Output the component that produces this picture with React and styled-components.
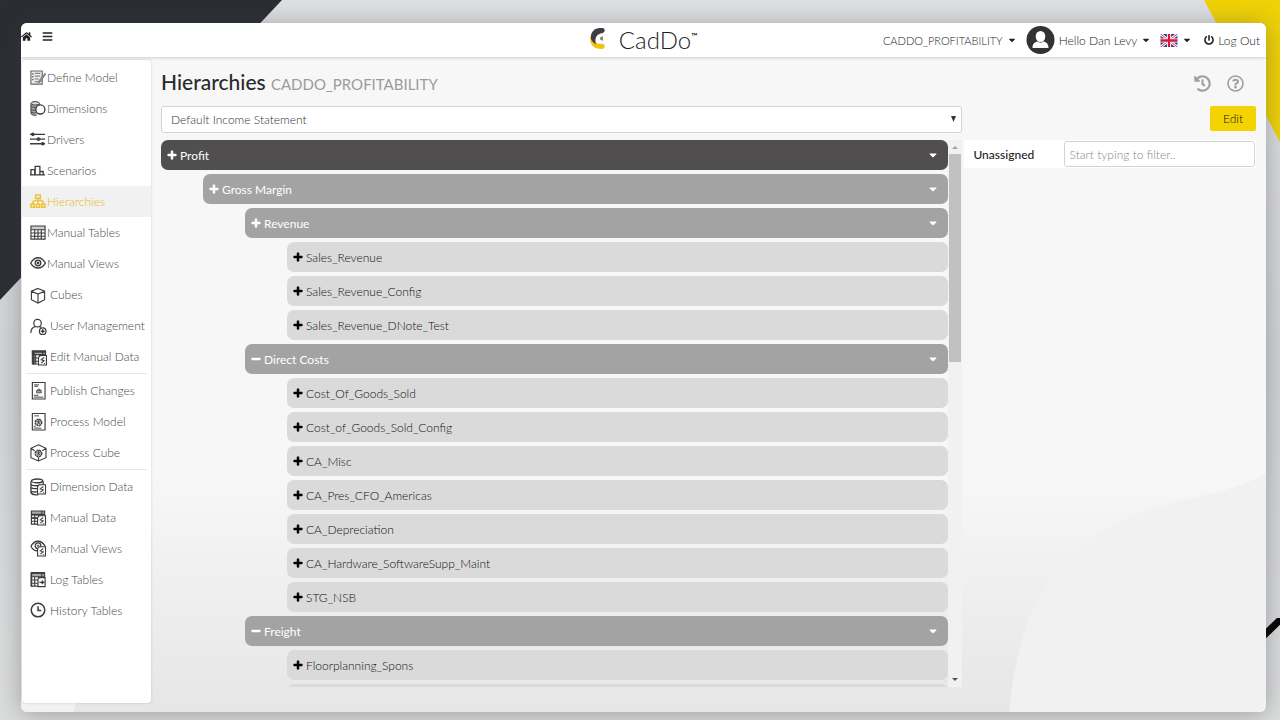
import React from 'react'
import styled, { createGlobalStyle, css } from 'styled-components'
import {
    FaBars,
    FaCaretDown,
    FaHistory,
    FaHome,
    FaMinus,
    FaPlus,
    FaPowerOff,
    FaRegQuestionCircle,
} from 'react-icons/fa'

const GlobalStyle = createGlobalStyle`
    * {
        box-sizing: border-box;
    }
    body {
        margin: 0;
        font-family: Lato, "Open Sans", sans-serif;
        font-size: 12px;
        font-weight: 300;
        color: #222;
        background: #d6d7d9;
    }
    button,
    input,
    select {
        font: inherit;
        color: inherit;
    }
`

/* page and window */
const Page = styled.div`
    position: relative;
    display: flex;
    min-height: 100vh;
    padding: 23px 14px 8px 21px;
    overflow: hidden;
    background: linear-gradient(#dfe0e2, #d2d3d5 50%, #dcdddd);
`
const DarkCorner = styled.div`
    position: absolute;
    top: 0;
    left: 0;
    width: 282px;
    height: 300px;
    background: #2a2d32;
    clip-path: polygon(0 0, 100% 0, 0 100%);
`
const YellowCorner = styled.div`
    position: absolute;
    top: 0;
    right: 0;
    width: 76px;
    height: 142px;
    background: #f0d206;
    clip-path: polygon(0 0, 100% 0, 100% 100%);
`
const Slash = styled.svg`
    position: absolute;
    right: 0;
    bottom: 76px;
    width: 24px;
    height: 26px;
`
const Window = styled.div`
    position: relative;
    display: flex;
    flex: 1;
    flex-direction: column;
    min-width: 0;
    overflow: hidden;
    border-radius: 6px;
    background: linear-gradient(#f7f7f7 66%, #e6e6e6);
`
const Shade = styled.div`
    position: relative;
    display: flex;
    flex: 1;
    min-width: 0;
    border-radius: 6px;
    box-shadow: 0 2px 24px rgba(60, 66, 74, 0.4);
`
const Curve = styled.svg`
    position: absolute;
    right: 0;
    bottom: 0;
    width: 260px;
    height: 245px;
`
const Foot = styled.div`
    position: absolute;
    left: 0;
    bottom: 0;
    width: 56px;
    height: 12px;
    background: #f1f1f1;
    clip-path: polygon(0 0, 100% 0, 94% 100%, 0 100%);
`

/* top bar */
const TopBar = styled.header`
    position: relative;
    display: grid;
    grid-template-columns: 1fr auto 1fr;
    align-items: center;
    height: 34px;
    background: #fff;
    box-shadow: 0 1px 3px rgba(0, 0, 0, 0.16);
`
const PlainButton = styled.button`
    display: inline-flex;
    align-items: center;
    padding: 0;
    border: 0;
    background: none;
    cursor: pointer;
    white-space: nowrap;
`
const LeftTools = styled.div`
    display: flex;
    align-items: center;
    gap: 10px;
    padding-bottom: 8px;
    color: #222;
`
const Logo = styled.a`
    display: flex;
    align-items: center;
    gap: 13px;
    color: #1d1d1b;
    text-decoration: none;
`
const LogoName = styled.span`
    display: flex;
    font-size: 24px;
    line-height: 24px;
`
const Trade = styled.span`
    font-size: 8px;
    font-weight: 700;
    line-height: 16px;
`
const UserTools = styled.nav`
    display: flex;
    align-items: center;
    justify-content: flex-end;
    padding-right: 6px;
`
const Menu = styled(PlainButton)`
    gap: 4px;
    margin-right: ${props => props.$after || '9px'};
    font-size: ${props => (props.$small ? '11px' : '12px')};
`

/* side bar */
const Body = styled.div`
    position: relative;
    display: flex;
    flex: 1;
    padding: 3px 10px 9px 1px;
`
const SideBar = styled.nav`
    flex: none;
    width: 129px;
    padding-top: 2px;
    border-radius: 4px;
    background: #fff;
    box-shadow: 0 0 3px rgba(0, 0, 0, 0.16);
`
const SideLink = styled.a`
    display: flex;
    align-items: center;
    gap: ${props => (props.$wide ? '4px' : '1px')};
    height: 31px;
    padding-left: 8px;
    color: #44484c;
    text-decoration: none;
    white-space: nowrap;
    ${props =>
        props.$active &&
        css`
            color: #e8b820;
            background: #f1f1f1;
        `}
`
const SideIcon = styled.svg`
    flex: none;
    width: 16px;
    height: 18px;
    overflow: visible;
    fill: none;
    stroke: ${props => (props.$active ? '#ecc43a' : '#3c3c3c')};
`
const Divider = styled.hr`
    height: 1px;
    margin: 1px 4px;
    border: 0;
    background: #e6e6e6;
`

/* main area */
const Main = styled.main`
    flex: 1;
    min-width: 0;
    padding-left: 10px;
`
const TitleRow = styled.div`
    display: flex;
    align-items: center;
    justify-content: space-between;
    height: 46px;
    padding-right: 12px;
`
const Title = styled.h1`
    margin: 0;
    font-size: 21px;
    font-weight: 500;
    line-height: 24px;
    color: #2a2a2a;
`
const Subtitle = styled.small`
    font-size: 15px;
    font-weight: 400;
    color: #9b9b9b;
`
const TitleTools = styled.div`
    display: flex;
    gap: 16px;
    color: #a0a0a0;
`
const Columns = styled.div`
    display: grid;
    grid-template-columns: minmax(0, 800fr) minmax(0, 293fr);
`
const SelectBox = styled.div`
    position: relative;
    height: 27px;
    margin-bottom: 7px;
`
const Select = styled.select`
    appearance: none;
    width: 100%;
    height: 27px;
    padding: 0 9px;
    border: 1px solid #d4d4d4;
    border-radius: 3px;
    background: #fff;
    color: #333;
`
const SelectArrow = styled.svg`
    position: absolute;
    top: 10px;
    right: 6px;
    width: 5px;
    height: 6px;
    fill: #333;
    pointer-events: none;
`
const ScrollPane = styled.div`
    display: flex;
    height: calc(100vh - 173px);
`
const Tree = styled.ul`
    display: flex;
    flex: 1;
    flex-direction: column;
    gap: 4px;
    min-width: 0;
    margin: 0;
    padding: 0;
    overflow: hidden;
    list-style: none;
`
const looks = {
    root: { back: '#504e4f', ink: '#fff' },
    group: { back: '#a3a3a3', ink: '#fff' },
    leaf: { back: '#dadada', ink: '#111' },
}
const Node = styled.li`
    display: flex;
    flex: none;
    align-items: center;
    gap: 3px;
    height: 30px;
    margin-left: ${props => props.$level * 42}px;
    padding: 0 9px 0 6px;
    border-radius: 7px;
    background: ${props => looks[props.$kind].back};
    color: ${props => looks[props.$kind].ink};
    font-weight: ${props => (props.$kind === 'leaf' ? 300 : 400)};
`
const Toggle = styled(PlainButton)`
    color: ${props => (props.$dark ? '#000' : '#fff')};

    svg {
        stroke: currentColor;
        stroke-width: 30px;
    }
`
const NodeMenu = styled(PlainButton)`
    margin-left: auto;
`
const ScrollTrack = styled.div`
    display: flex;
    flex: none;
    flex-direction: column;
    align-items: center;
    width: 14px;
    background: #f1f1f1;
`
const ScrollArrow = styled.svg`
    flex: none;
    width: 14px;
    height: 14px;
    fill: ${props => (props.$off ? '#a3a3a3' : '#505050')};
`
const ScrollSpace = styled.div`
    flex: 1;
    width: 12px;
`
const ScrollThumb = styled.div`
    height: 40%;
    background: #c1c1c1;
`
const SidePane = styled.div`
    padding-left: 2px;
`
const EditRow = styled.div`
    display: flex;
    justify-content: flex-end;
    height: 34px;
`
const EditButton = styled.button`
    width: 46px;
    height: 25px;
    padding: 0;
    border: 0;
    border-radius: 2px;
    background: #f4d303;
    color: #111;
    cursor: pointer;
`
const FilterRow = styled.div`
    display: flex;
    align-items: center;
    justify-content: space-between;
    height: 28px;
    padding: 0 1px 0 9px;
    background: #fff;
`
const FilterLabel = styled.label`
    font-weight: 500;
    color: #222;
`
const FilterInput = styled.input`
    width: 68%;
    height: 26px;
    padding: 0 5px;
    border: 1px solid #d4d4d4;
    border-radius: 3px;
    background: #fff;
    &::placeholder {
        color: #888;
        opacity: 1;
    }
`

const gear = (
    <>
        <circle cx="9" cy="9.500" r="3.500" fill="#bbb" strokeWidth="1.400" strokeDasharray="2 .8" />
        <path d="M6.500 7.500l5 4.500M11.500 7l-4 5M9 6v4" strokeWidth=".8" />
    </>
)
const sheet = (
    <>
        <path d="M8 8.500L10 6.500h6.500v10H8z" fill="#f4f4f4" strokeWidth="1.100" />
        <path d="M14 8.500l-3 2.500 3 1-3 2.500M14 15h1" strokeWidth="1.100" />
    </>
)
const grid = (
    <>
        <path d="M1 1.500h15v4H1z" fill="#aaa" strokeWidth="0" />
        <path d="M1.500 1.500h14v14h-14zM1 5.500h15M1 9h15M1 12.500h15M5 5v11M9 5v11M12.500 1v15" strokeWidth="1.200" />
    </>
)

const icons = {
    define: (
        <g stroke="#666">
            <path d="M1 1.500h12v14H1z" fill="#eee" strokeWidth="1.200" />
            <path d="M5 4h6M5 7h6M5 10h4M5 13h6" />
            <path d="M3 4v9" strokeWidth="1.500" strokeDasharray="1.500" />
            <path d="M16 4l-6 7-1 3 2.500-1.500 5-7.500z" fill="#999" strokeWidth=".8" />
        </g>
    ),
    dimensions: (
        <>
            <path d="M10 4.500v-1C10 1 1 1 1 3.500v10c0 2 4 2.500 6 2" fill="#aaa" />
            <ellipse cx="5.500" cy="3" rx="4.500" ry="1.800" fill="#ddd" />
            <path d="M1 6c1 1.500 4 1.500 6 1M1 9c1 1.500 3 1.500 5 1M1 12c1 1 3 1.500 5 1" />
            <circle cx="11" cy="9.500" r="4.800" fill="#fff" strokeWidth="1.400" />
        </>
    ),
    drivers: (
        <g strokeWidth="1.400">
            <path d="M0 3h16M0 8h16M0 13h16" />
            <circle cx="3" cy="3" r="1.200" fill="#3c3c3c" />
            <circle cx="9" cy="8" r="1.300" fill="#777" />
            <circle cx="13.500" cy="13" r="1.200" fill="#3c3c3c" />
        </g>
    ),
    scenarios: (
        <path d="M1 13V7.500h4V13M5.500 13V4h5v9M10.500 13V9.500H14V13M0 13.200h16" strokeWidth="1.400" />
    ),
    hierarchies: (
        <path
            d="M6 1.500h5v3.500H6zM1 11.500h3.500v3H1zM6.700 11.500h3.600v3H6.700zM12.500 11.500H16v3h-3.500zM8.500 5v6M3 11.500V9l2-1.500h7L14 9v2.500"
            strokeWidth="1.600"
        />
    ),
    tables: (
        <>
            <path d="M1 1.500h15v4H1z" fill="#ccc" strokeWidth="0" />
            <path d="M1 1.500h15v14H1zM1 5.500h15M1 9h15M1 12.500h15M5 5v10M8.500 5v10M12 5v10" strokeWidth="1.200" />
        </>
    ),
    views: (
        <g strokeWidth="1.400">
            <path d="M.8 8c4-7.500 11.500-7.500 15.500 0-4 7-11.500 7-15.500 0z" />
            <circle cx="8.500" cy="8" r="3" />
            <circle cx="8.500" cy="8" r=".8" />
        </g>
    ),
    cubes: (
        <path d="M8.500 2l7 3v9l-7 3.500-7-3.500V5zM1.500 5l7 3 7-3M8.500 8v9.500" strokeWidth="1.200" />
    ),
    users: (
        <g strokeWidth="1.300">
            <circle cx="8" cy="6" r="4" />
            <path d="M.8 16.500C1 12 3 10 6 9.700M10 9.700l2 .8" />
            <circle cx="13.500" cy="14.500" r="3.500" fill="#fff" />
            <path d="M11.500 14.500h4M13.500 12.500v4" strokeWidth="1.500" />
        </g>
    ),
    edit: (
        <g transform="translate(1 1)">
            {grid}
            <path d="M1 2.500h15M3 2v14" strokeWidth="2" />
            {sheet}
        </g>
    ),
    publish: (
        <>
            <path d="M2.500 0h13.500v17.500H2.500z" strokeWidth="1.200" />
            <path d="M4.500 2.500h5M4.500 4h4M4 13.500h5M4 15.500h10" />
            <path d="M7 8.500h5v2.500H7zM8 8.500v-.8l1.500-1 1.500 1v.8" fill="#aaa" strokeWidth=".8" />
        </>
    ),
    model: (
        <>
            <path d="M2.500 0h13.500v17.500H2.500z" strokeWidth="1.200" />
            <path d="M4.500 2.500h5M4 15.500h8M4 13.500h2" />
            {gear}
        </>
    ),
    cube: (
        <>
            <path d="M9 .3l8 3.700v10l-8 3.500-8-3.500V4zM1 4l4 2.500M17 4l-4 2.500M9 13.500v4" strokeWidth="1.200" />
            {gear}
        </>
    ),
    data: (
        <g strokeWidth="1.400">
            <ellipse cx="7.500" cy="2.500" rx="6" ry="2" />
            <path d="M1 3v12c1 2 5 2.500 8 2M14 3v4M1 6c1 2 6 2 9 1M1 9.500c1 1.500 5 1.500 7 1M1 13c1 1.500 5 1.500 7 1" />
            {sheet}
        </g>
    ),
    manual: (
        <>
            {grid}
            <path d="M1 5.500h15M1 9h7" strokeWidth="1.800" />
            {sheet}
        </>
    ),
    eye: (
        <>
            <path d="M1 6c4-7 11-7 15 0M1 6c2 4 4 5 7 5" strokeWidth="1.400" />
            <circle cx="8.500" cy="5.500" r="3" strokeWidth="1.300" />
            <circle cx="8.500" cy="5.500" r=".8" />
            {sheet}
        </>
    ),
    log: (
        <>
            {grid}
            <path d="M1 1.500h15M1.500 1v15" strokeWidth="1.800" />
            <path d="M8.500 8L10 6.500h6v9.500H8.500z" fill="#fff" strokeWidth="1.200" />
            <path d="M10 11.500h4M12.500 9.700l2 1.800-2 1.800" strokeWidth="1.300" />
        </>
    ),
    history: (
        <g strokeWidth="1.600">
            <circle cx="8.500" cy="8" r="7.200" />
            <path d="M8.500 4v4.500H12" />
        </g>
    ),
}

const menuGroups = [
    [
        ['Define Model', 'define'],
        ['Dimensions', 'dimensions'],
        ['Drivers', 'drivers'],
        ['Scenarios', 'scenarios'],
        ['Hierarchies', 'hierarchies'],
        ['Manual Tables', 'tables'],
        ['Manual Views', 'views'],
        ['Cubes', 'cubes', true],
        ['User Management', 'users', true],
        ['Edit Manual Data', 'edit', true],
    ],
    [
        ['Publish Changes', 'publish', true],
        ['Process Model', 'model', true],
        ['Process Cube', 'cube', true],
    ],
    [
        ['Dimension Data', 'data', true],
        ['Manual Data', 'manual', true],
        ['Manual Views', 'eye', true],
        ['Log Tables', 'log', true],
        ['History Tables', 'history', true],
    ],
]

const nodes = [
    { name: 'Profit', level: 0, kind: 'root' },
    { name: 'Gross Margin', level: 1, kind: 'group' },
    { name: 'Revenue', level: 2, kind: 'group' },
    { name: 'Sales_Revenue', level: 3, kind: 'leaf' },
    { name: 'Sales_Revenue_Config', level: 3, kind: 'leaf' },
    { name: 'Sales_Revenue_DNote_Test', level: 3, kind: 'leaf' },
    { name: 'Direct Costs', level: 2, kind: 'group', open: true },
    { name: 'Cost_Of_Goods_Sold', level: 3, kind: 'leaf' },
    { name: 'Cost_of_Goods_Sold_Config', level: 3, kind: 'leaf' },
    { name: 'CA_Misc', level: 3, kind: 'leaf' },
    { name: 'CA_Pres_CFO_Americas', level: 3, kind: 'leaf' },
    { name: 'CA_Depreciation', level: 3, kind: 'leaf' },
    { name: 'CA_Hardware_SoftwareSupp_Maint', level: 3, kind: 'leaf' },
    { name: 'STG_NSB', level: 3, kind: 'leaf' },
    { name: 'Freight', level: 2, kind: 'group', open: true },
    { name: 'Floorplanning_Spons', level: 3, kind: 'leaf' },
    { name: '', level: 3, kind: 'leaf' },
]

const LogoMark = () => (
    <svg width="16" height="25" viewBox="0 1 16 25">
        <path
            d="M.5 9C-1 18 4 22 12 22c3.500 0 3.500-5 .5-5.200C6 17 2 15 .5 9z"
            fill="#efc310"
        />
        <path
            d="M12.500 1C4 0 0 6 1 12c1 2.500 3 4.500 5 5C4.500 12 6 7 12 6.200c3.500-.5 3.500-5 .5-5.200z"
            fill="#3f3f41"
        />
        <path d="M13 9v5l-3-1.500v-2z" fill="#888" />
    </svg>
)

const Avatar = () => (
    <svg width="29" height="28" viewBox="0 0 28 28">
        <circle cx="14" cy="14" r="14" fill="#333" />
        <ellipse cx="14" cy="10.500" rx="4.800" ry="5.500" fill="#fff" />
        <path d="M6 22c0-4 2-6 5-6.500 2 1.500 4 1.500 6 0 3 .5 5 2.500 5 6.500z" fill="#fff" />
    </svg>
)

const Flag = () => (
    <svg width="18" height="13" viewBox="0 0 18 14">
        <path d="M0 0h18v14H0z" fill="#2b3f8c" />
        <path d="M0 0l18 14M18 0L0 14" stroke="#fff" strokeWidth="3" />
        <path d="M0 0l18 14M18 0L0 14" stroke="#d8294a" strokeWidth="1" />
        <path d="M9 0v14M0 7h18" stroke="#fff" strokeWidth="4.500" />
        <path d="M9 0v14M0 7h18" stroke="#d8153a" strokeWidth="2.500" />
    </svg>
)

const SideMenu = () => (
    <SideBar>
        {menuGroups.map((group, index) => (
            <React.Fragment key={index}>
                {index > 0 && <Divider />}
                {group.map(([label, icon, wide]) => {
                    const active = label === 'Hierarchies'
                    return (
                        <SideLink href="#" key={label} $wide={wide} $active={active}>
                            <SideIcon viewBox="0 0 17 18" $active={active}>
                                {icons[icon]}
                            </SideIcon>
                            {label}
                        </SideLink>
                    )
                })}
            </React.Fragment>
        ))}
    </SideBar>
)

const TreeNode = ({ name, level, kind, open }) => (
    <Node $level={level} $kind={kind}>
        <Toggle aria-label={open ? 'Collapse' : 'Expand'} $dark={kind === 'leaf'}>
            {open ? <FaMinus size={10} /> : <FaPlus size={10} />}
        </Toggle>
        <span>{name}</span>
        {kind !== 'leaf' && (
            <NodeMenu aria-label="Options">
                <FaCaretDown size={12} />
            </NodeMenu>
        )}
    </Node>
)

const App = () => (
    <Page>
        <GlobalStyle />
        <DarkCorner />
        <YellowCorner />
        <Slash viewBox="0 0 24 26">
            <path d="M0 25L26 0" stroke="#000" strokeWidth="7" />
        </Slash>
        <Shade>
            <Window>
                <Curve viewBox="0 0 260 245">
                    <path
                        d="M3 245C8 190 24 130 54 103C100 50 145 42 177 33C210 27 240 17 260 7V245z"
                        fill="#f1f1f1"
                    />
                </Curve>
                <Foot />
                <TopBar>
                    <LeftTools>
                        <PlainButton aria-label="Home">
                            <FaHome size={11} />
                        </PlainButton>
                        <PlainButton aria-label="Menu">
                            <FaBars size={11} />
                        </PlainButton>
                    </LeftTools>
                    <Logo href="#">
                        <LogoMark />
                        <LogoName>
                            CadDo<Trade>™</Trade>
                        </LogoName>
                    </Logo>
                    <UserTools>
                        <Menu $small>
                            CADDO_PROFITABILITY <FaCaretDown size={10} />
                        </Menu>
                        <Menu>
                            <Avatar />
                            Hello Dan Levy <FaCaretDown size={10} />
                        </Menu>
                        <Menu $after="12px" aria-label="Language">
                            <Flag />
                            <FaCaretDown size={10} />
                        </Menu>
                        <Menu $after="0">
                            <FaPowerOff size={10} />
                            Log Out
                        </Menu>
                    </UserTools>
                </TopBar>
                <Body>
                    <SideMenu />
                    <Main>
                        <TitleRow>
                            <Title>
                                Hierarchies <Subtitle>CADDO_PROFITABILITY</Subtitle>
                            </Title>
                            <TitleTools>
                                <PlainButton aria-label="History">
                                    <FaHistory size={17} />
                                </PlainButton>
                                <PlainButton aria-label="Help">
                                    <FaRegQuestionCircle size={17} />
                                </PlainButton>
                            </TitleTools>
                        </TitleRow>
                        <Columns>
                            <div>
                                <SelectBox>
                                    <Select aria-label="Hierarchy">
                                        <option>Default Income Statement</option>
                                    </Select>
                                    <SelectArrow viewBox="0 0 5 6">
                                        <path d="M0 0h5L2.500 6z" />
                                    </SelectArrow>
                                </SelectBox>
                                <ScrollPane>
                                    <Tree>
                                        {nodes.map(node => (
                                            <TreeNode key={node.name} {...node} />
                                        ))}
                                    </Tree>
                                    <ScrollTrack>
                                        <ScrollArrow viewBox="0 0 14 14" $off>
                                            <path d="M4 9h6L7 6z" />
                                        </ScrollArrow>
                                        <ScrollSpace>
                                            <ScrollThumb />
                                        </ScrollSpace>
                                        <ScrollArrow viewBox="0 0 14 14">
                                            <path d="M4 5h6L7 8z" />
                                        </ScrollArrow>
                                    </ScrollTrack>
                                </ScrollPane>
                            </div>
                            <SidePane>
                                <EditRow>
                                    <EditButton>Edit</EditButton>
                                </EditRow>
                                <FilterRow>
                                    <FilterLabel htmlFor="filter">Unassigned</FilterLabel>
                                    <FilterInput id="filter" placeholder="Start typing to filter.." />
                                </FilterRow>
                            </SidePane>
                        </Columns>
                    </Main>
                </Body>
            </Window>
        </Shade>
    </Page>
)

export default App
